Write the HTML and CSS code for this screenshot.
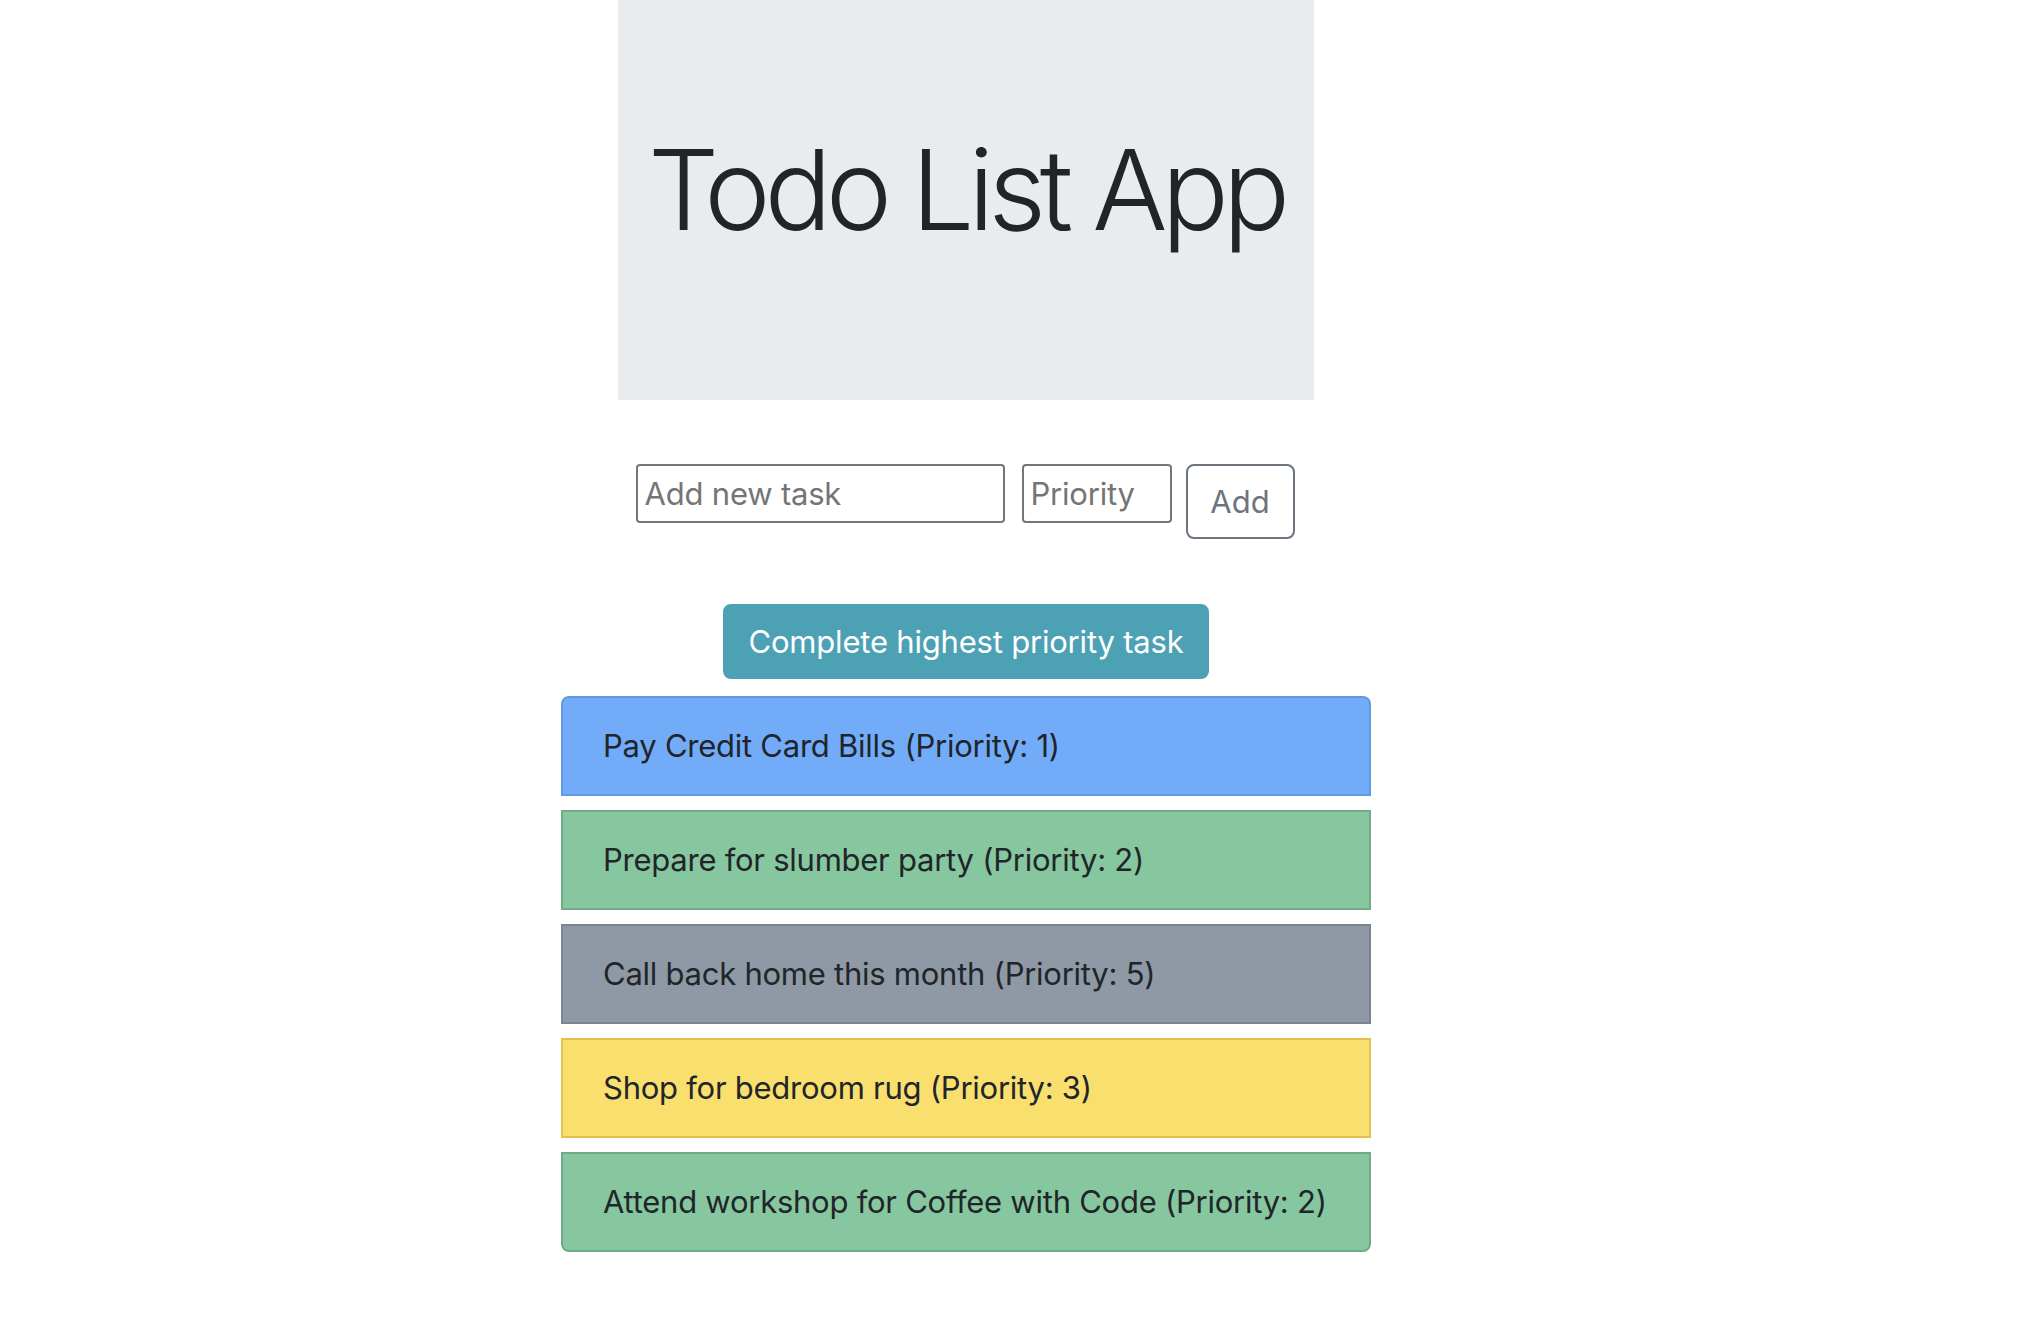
FILE: index.html
```html
<!DOCTYPE html>
<html lang="en">
<head>
<meta charset="utf-8">
<title>Todo List App</title>
<link rel="stylesheet" href="styles.css">
</head>
<body>
<div class="page">
  <header class="jumbotron">
    <h1 class="display">Todo List App</h1>
  </header>
  <form class="add-form">
    <input class="field field-task" type="text" placeholder="Add new task">
    <input class="field field-priority" type="text" placeholder="Priority">
    <button class="btn-add" type="button">Add</button>
  </form>
  <button class="btn-complete" type="button">Complete highest priority task</button>
  <ul class="task-list">
    <li class="task task-blue">Pay Credit Card Bills (Priority: 1)</li>
    <li class="task task-green">Prepare for slumber party (Priority: 2)</li>
    <li class="task task-gray">Call back home this month (Priority: 5)</li>
    <li class="task task-yellow">Shop for bedroom rug (Priority: 3)</li>
    <li class="task task-green">Attend workshop for Coffee with Code (Priority: 2)</li>
  </ul>
</div>
</body>
</html>
```
FILE: styles.css
```css
* { box-sizing: border-box; }
html, body { margin: 0; padding: 0; background: #ffffff; }
body {
  font-family: "Inter", "Liberation Sans", sans-serif;
  font-size: 32px;
  line-height: 1.5;
  color: #212529;
}
.page {
  width: 1932px;
  display: flex;
  flex-direction: column;
  align-items: center;
}
.jumbotron {
  width: 696px;
  height: 400px;
  background: #e9ebef;
  padding: 122px 0 0;
  text-align: center;
}
.display {
  margin: 0;
  font-family: "Inter", "Liberation Sans", sans-serif;
  font-weight: 300;
  font-size: 112px;
  line-height: 1.2;
  letter-spacing: -6.2px;
  color: #212529;
  white-space: nowrap;
}
.add-form {
  margin-top: 64px;
  display: flex;
  align-items: flex-start;
  padding-right: 2px;
}
.field {
  height: 59px;
  border: 2px solid #767676;
  border-radius: 4px;
  padding: 0 7px;
  font-family: "Inter", "Liberation Sans", sans-serif;
  font-size: 31px;
  letter-spacing: -0.2px;
  color: #212529;
  background: #fff;
  outline: none;
}
.field::placeholder { color: #757575; }
.field-task { width: 369px; }
.field-priority { width: 150px; margin-left: 17px; }
.btn-add {
  margin-left: 14px;
  width: 109px;
  height: 75px;
  border: 2px solid #6c757d;
  border-radius: 8px;
  background: #fff;
  color: #6c757d;
  font-family: "Inter", "Liberation Sans", sans-serif;
  font-size: 31px;
  padding: 0;
}
.btn-complete {
  margin-top: 65px;
  height: 75px;
  padding: 0 24px;
  border: 2px solid #4ca1b5;
  border-radius: 8px;
  background: #4ca1b5;
  color: #ffffff;
  font-family: "Inter", "Liberation Sans", sans-serif;
  font-size: 31px;
  letter-spacing: -0.2px;
  line-height: 48px;
}
.task-list {
  list-style: none;
  margin: 17px 0 0;
  padding: 0;
  width: 810px;
}
.task {
  height: 100px;
  margin-bottom: 14px;
  padding: 0 40px;
  border: 2px solid;
  display: flex;
  align-items: center;
  font-size: 31px;
  letter-spacing: -0.25px;
  white-space: nowrap;
}
.task:first-child { border-radius: 8px 8px 0 0; }
.task:last-child { border-radius: 0 0 8px 8px; }
.task-blue { background: #72acf8; border-color: #6199e2; }
.task-green { background: #86c79f; border-color: #6fab86; }
.task-gray { background: #8e99a5; border-color: #7b8591; }
.task-yellow { background: #f9df6e; border-color: #e2c150; }
```
